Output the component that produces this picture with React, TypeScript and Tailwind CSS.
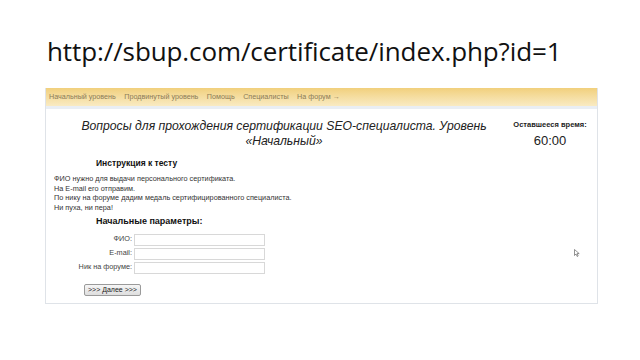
import React from 'react'

const NAV = ['Начальный уровень', 'Продвинутый уровень', 'Помощь', 'Специалисты', 'На форум →']

const FIELDS = ['ФИО:', 'E-mail:', 'Ник на форуме:']

export default function App() {
  return (
    <div className="relative w-[640px] h-[360px] bg-white overflow-hidden">
      {/* slide title */}
      <div className="pt-[33px] pl-[47px] text-[26px] leading-[36px] text-[#111] font-['Open_Sans',sans-serif] tracking-[-0.1px]">
        http://sbup.com/certificate/index.php?id=1
      </div>

      {/* screenshot of page */}
      <div className="mt-[19px] ml-[45px] w-[553px] h-[216px] border-l border-r border-b border-[#dfe3e8] font-['Liberation_Sans',Arial,sans-serif]">
        <div className="h-[18px] flex items-center gap-[8.5px] pl-[3px] bg-gradient-to-b from-[#f1d07c] to-[#f9ebc3] text-[7.2px] text-[#8b7b57]">
          {NAV.map((n) => (
            <span key={n}>{n}</span>
          ))}
        </div>
        <div className="h-[3px] bg-[#e9eef4]" />

        <div className="flex pt-[10px]">
          <div className="ml-[18px] w-[440px] text-center italic text-[12.2px] leading-[15px] text-[#222]">
            Вопросы для прохождения сертификации SEO-специалиста. Уровень
            <br />
            «Начальный»
          </div>
          <div className="ml-[6px] w-[80px] text-center text-[#222]">
            <div className="text-[7.5px] font-bold leading-[10px] mt-[1px]">Оставшееся время:</div>
            <div className="text-[13px] leading-[16px] mt-[3px]">60:00</div>
          </div>
        </div>

        <div className="pl-[50px] mt-[9px] text-[8.5px] font-bold text-[#111] leading-[10px]">
          Инструкция к тесту
        </div>

        <div className="pl-[8px] mt-[6px] text-[7.3px] leading-[9.5px] text-[#333]">
          <div>ФИО нужно для выдачи персонального сертификата.</div>
          <div>На E-mail его отправим.</div>
          <div>По нику на форуме дадим медаль сертифицированного специалиста.</div>
          <div>Ни пуха, ни пера!</div>
        </div>

        <div className="pl-[50px] mt-[4px] text-[9px] font-bold text-[#111] leading-[11px]">
          Начальные параметры:
        </div>

        <div className="mt-[7px] flex flex-col gap-[2.5px]">
          {FIELDS.map((f) => (
            <div key={f} className="flex items-center">
              <div className="w-[87px] text-right text-[7.3px] text-[#444] pr-[1px]">{f}</div>
              <div className="ml-[1px] w-[131px] h-[11.5px] border border-[#d8d8d8] bg-white" />
            </div>
          ))}
        </div>

        <div className="pl-[38px] mt-[10px]">
          <div className="w-[57px] h-[12px] border border-[#9a9a9a] rounded-[2px] bg-gradient-to-b from-[#f6f6f6] to-[#dedede] text-[7px] leading-[10px] text-center text-[#222]">
            &gt;&gt;&gt; Далее &gt;&gt;&gt;
          </div>
        </div>
      </div>

      {/* mouse cursor */}
      <svg className="absolute left-[574px] top-[249px]" width="6" height="8" viewBox="0 0 6 8">
        <path d="M0.5 0.5 L0.5 6.5 L2 5 L3.2 7.5 L4.2 7 L3 4.6 L5.2 4.6 Z" fill="#fff" stroke="#666" strokeWidth="0.7" />
      </svg>
    </div>
  )
}
